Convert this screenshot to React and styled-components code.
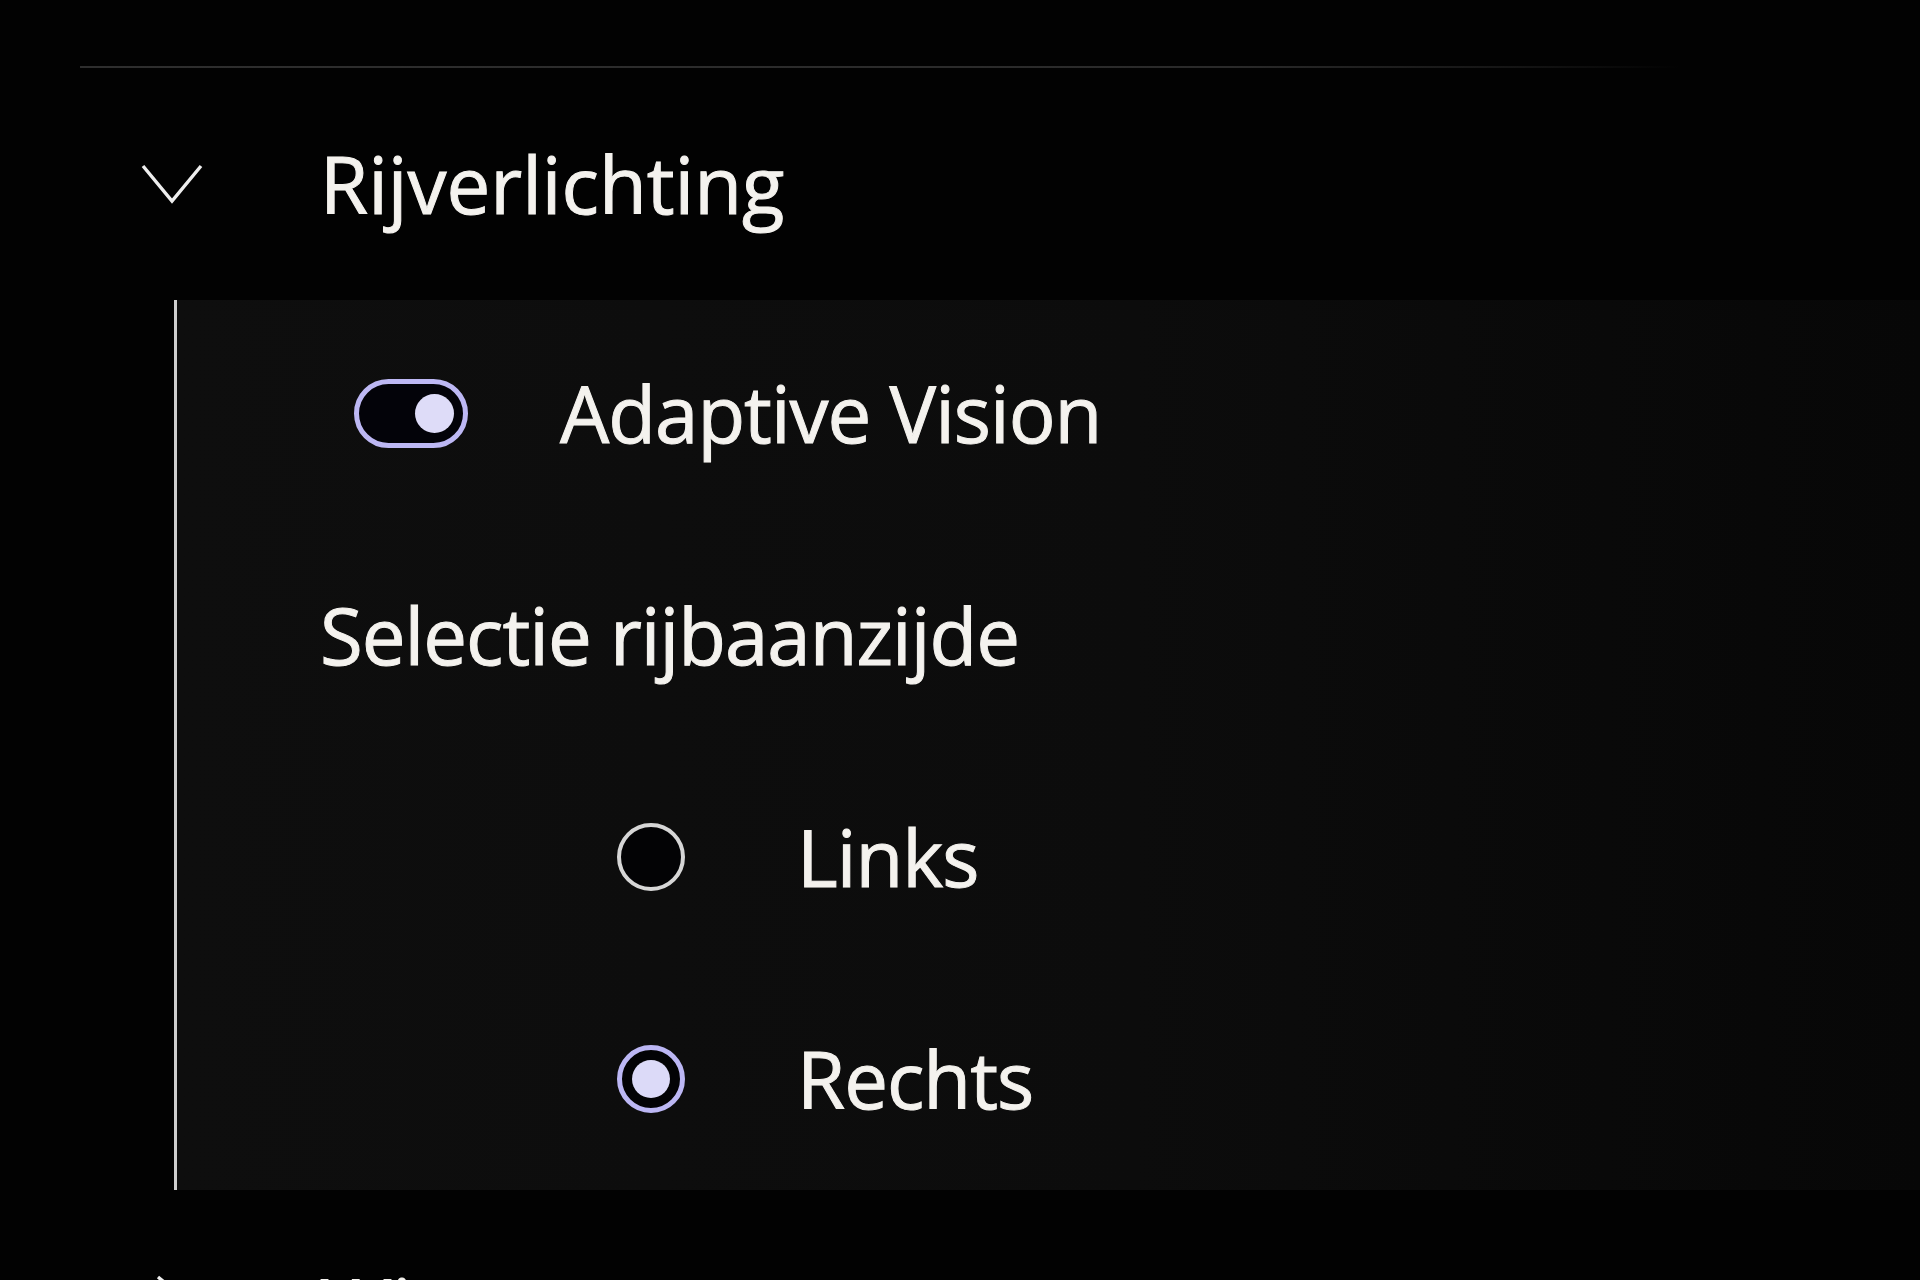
import React, { useState } from 'react';
import styled, { createGlobalStyle } from 'styled-components';

const GlobalStyles = createGlobalStyle`
  html, body {
    margin: 0;
    padding: 0;
    background: #020202;
    overflow: hidden;
  }
  body {
    font-family: "Open Sans", "Noto Sans", "DejaVu Sans", sans-serif;
    color: #f4f2ee;
  }
`;

const Screen = styled.div`
  width: 1920px;
  height: 1280px;
  overflow: hidden;
  padding-left: 80px;
  box-sizing: border-box;
  background: #020202;
`;

const TopSpacer = styled.div`
  height: 66px;
`;

const Divider = styled.div`
  height: 2px;
  margin-right: 240px;
  background: linear-gradient(90deg, #2e2e2e 0%, #2a2a2a 72%, #141414 90%, #020202 100%);
`;

// Kop van een inklapbare sectie
const SectionHeader = styled.div`
  height: 232px;
  display: flex;
  align-items: center;
`;

const ChevronBox = styled.div`
  width: 240px;
  flex-shrink: 0;
  display: flex;
  align-items: center;
  padding-left: ${(p) => (p.$open ? '61px' : '76px')};
  box-sizing: border-box;
`;

const Label = styled.span`
  font-size: 78px;
  font-weight: 400;
  line-height: 1;
  letter-spacing: ${(p) => (p.$tight ? '-1px' : '0px')};
  color: #f4f2ee;
  -webkit-text-stroke: 1px #f4f2ee;
  white-space: nowrap;
`;

const Panel = styled.div`
  margin-left: 94px;
  border-left: 3px solid #cfcfcf;
  padding-top: 2px;
  background: linear-gradient(90deg, #0e0e0e 0%, #0c0c0c 55%, #070707 100%);
`;

const Row = styled.div`
  height: 222px;
  display: flex;
  align-items: center;
  padding-left: ${(p) => p.$indent}px;
  box-sizing: border-box;
  cursor: ${(p) => (p.$clickable ? 'pointer' : 'default')};
`;

const Toggle = styled.div`
  width: 114px;
  height: 69px;
  box-sizing: border-box;
  border: 5px solid #bdb8f4;
  border-radius: 35px;
  background: #030309;
  display: flex;
  align-items: center;
  justify-content: ${(p) => (p.$on ? 'flex-end' : 'flex-start')};
  padding: 0 9px;
  flex-shrink: 0;
`;

const Knob = styled.div`
  width: 39px;
  height: 39px;
  border-radius: 50%;
  background: #dedcf8;
`;

const Radio = styled.div`
  width: 68px;
  height: 68px;
  box-sizing: border-box;
  border-radius: 50%;
  border: ${(p) => (p.$checked ? '5px solid #bcb7f4' : '4px solid #d6d6d6')};
  background: #030305;
  display: flex;
  align-items: center;
  justify-content: center;
  flex-shrink: 0;
`;

const RadioDot = styled.div`
  width: 38px;
  height: 38px;
  border-radius: 50%;
  background: #dcdaf8;
`;

const ControlLabel = styled(Label)`
  margin-left: ${(p) => p.$gap}px;
`;

function Chevron({ open }) {
  if (open) {
    return (
      <svg width="62" height="40" viewBox="0 0 62 40" fill="none">
        <polyline points="2,2 31,37 60,2" stroke="#eeeeee" strokeWidth="3.4" strokeLinejoin="miter" />
      </svg>
    );
  }
  return (
    <svg width="40" height="62" viewBox="0 0 40 62" fill="none">
      <polyline points="2,2 37,31 2,60" stroke="#eeeeee" strokeWidth="3.4" strokeLinejoin="miter" />
    </svg>
  );
}

export default function App() {
  const [adaptive, setAdaptive] = useState(true);
  const [side, setSide] = useState('rechts');

  return (
    <Screen>
      <GlobalStyles />
      <TopSpacer />
      <Divider />

      <SectionHeader>
        <ChevronBox $open>
          <Chevron open />
        </ChevronBox>
        <Label>Rijverlichting</Label>
      </SectionHeader>

      <Panel>
        <Row $indent={177} $clickable onClick={() => setAdaptive(!adaptive)}>
          <Toggle $on={adaptive}>
            <Knob />
          </Toggle>
          <ControlLabel $gap={92} $tight>Adaptive Vision</ControlLabel>
        </Row>

        <Row $indent={143}>
          <Label $tight>Selectie rijbaanzijde</Label>
        </Row>

        <Row $indent={440} $clickable onClick={() => setSide('links')}>
          <Radio $checked={side === 'links'}>
            {side === 'links' && <RadioDot />}
          </Radio>
          <ControlLabel $gap={112} $tight>Links</ControlLabel>
        </Row>

        <Row $indent={440} $clickable onClick={() => setSide('rechts')}>
          <Radio $checked={side === 'rechts'}>
            {side === 'rechts' && <RadioDot />}
          </Radio>
          <ControlLabel $gap={112} $tight>Rechts</ControlLabel>
        </Row>
      </Panel>

      <SectionHeader>
        <ChevronBox>
          <Chevron />
        </ChevronBox>
        <Label>Wissers</Label>
      </SectionHeader>
    </Screen>
  );
}
